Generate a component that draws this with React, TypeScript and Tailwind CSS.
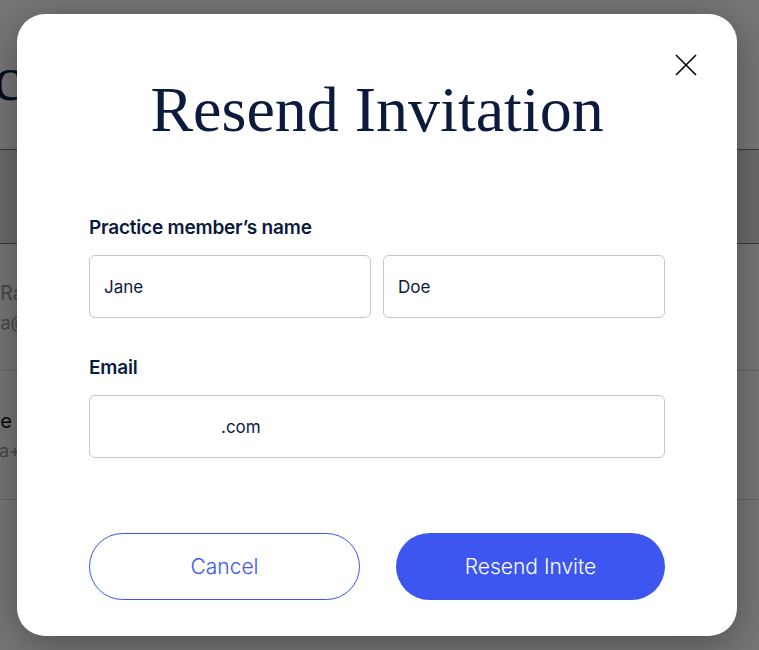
const ROWS = [
  { name: 'Rachel Ra', email: 'rachel.ra@', dark: false, h: 'h-[127px]', nameW: 'w-[24px]', emailW: 'w-[28px]' },
  { name: 'Jane', email: 'jana+', dark: true, h: 'h-[129px]', nameW: 'w-[12px]', emailW: 'w-[21px]' },
];

function BackgroundPage() {
  return (
    <div className="min-h-[650px] bg-white font-['Inter',sans-serif]">
      <div className="flex h-[150px] items-center border-b border-[#7a7d84] pt-[8px]">
        <div className="flex w-[22px] shrink-0 justify-end">
          <h2 className="whitespace-nowrap font-['Liberation_Serif',serif] text-[64px] leading-[72px] text-[#0b1a3d]">
            Team Practic
          </h2>
        </div>
      </div>
      <div className="h-[94px] border-b border-[#7a7d84] bg-[#e3e5e9]" />
      {ROWS.map((row) => (
        <div key={row.email} className={`flex ${row.h} flex-col justify-center gap-[4px] border-b border-[#dcdcdc]`}>
          <div className={`flex ${row.nameW} justify-end`}>
            <span className={`whitespace-nowrap text-[20px] leading-[28px] ${row.dark ? 'text-[#111]' : 'text-[#9a9a9a]'}`}>
              {row.name}
            </span>
          </div>
          <div className={`flex ${row.emailW} justify-end`}>
            <span className="whitespace-nowrap text-[18px] leading-[24px] text-[#9a9a9a]">{row.email}</span>
          </div>
        </div>
      ))}
    </div>
  );
}

export default function App() {
  return (
    <div className="relative h-[650px] w-[759px] overflow-hidden">
      <BackgroundPage />

      <div className="absolute inset-0 flex items-start justify-start bg-[rgba(0,0,0,0.535)] pl-[17px] pt-[14px]">
        <div className="relative flex h-[622px] w-[720px] flex-col rounded-[28px] bg-white px-[72px] shadow-[0_8px_40px_rgba(0,0,0,0.35)]">
          <button className="absolute left-[658px] top-[40px] text-black">
            <svg width="22" height="22" viewBox="0 0 22 22" fill="none" stroke="currentColor" strokeWidth="1.6">
              <path d="M1 1L21 21M21 1L1 21" />
            </svg>
          </button>

          <h1 className="mt-[60px] text-center font-['Liberation_Serif',serif] text-[64px] leading-[72px] text-[#0b1a3d]">
            Resend Invitation
          </h1>

          <div className="mt-[70px] font-['Inter',sans-serif]">
            <label className="block text-[19px] font-semibold leading-[24px] tracking-[-0.2px] text-[#0b1a3d]">
              Practice member’s name
            </label>
            <div className="mt-[15px] grid grid-cols-2 gap-[12px]">
              <input
                defaultValue="Jane"
                className="h-[63px] rounded-[6px] border border-[#c6c6c6] px-[14px] text-[17px] text-[#0b1a3d] outline-none"
              />
              <input
                defaultValue="Doe"
                className="h-[63px] rounded-[6px] border border-[#c6c6c6] px-[14px] text-[17px] text-[#0b1a3d] outline-none"
              />
            </div>

            <label className="mt-[38px] block text-[19px] font-semibold leading-[24px] tracking-[-0.2px] text-[#0b1a3d]">
              Email
            </label>
            <input
              defaultValue=".com"
              className="mt-[15px] h-[63px] w-full rounded-[6px] border border-[#c6c6c6] pl-[131px] pr-[14px] text-[17px] text-[#0b1a3d] outline-none"
            />
          </div>

          <div className="mt-[75px] flex gap-[36px] font-['Inter',sans-serif]">
            <button className="h-[67px] flex-1 rounded-full border border-[#3d56ef] text-[21px] font-light text-[#3d56ef]">
              Cancel
            </button>
            <button className="h-[67px] flex-1 rounded-full bg-[#3d56ef] text-[21px] font-light text-white">
              Resend Invite
            </button>
          </div>
        </div>
      </div>
    </div>
  );
}
